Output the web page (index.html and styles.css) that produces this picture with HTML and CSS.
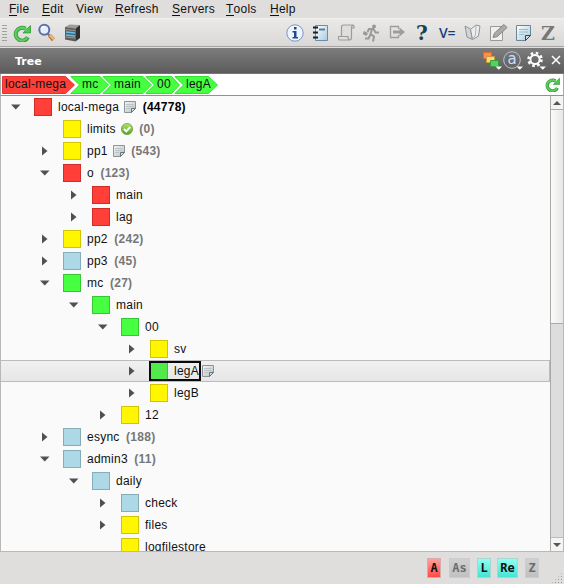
FILE: index.html
```html
<!DOCTYPE html>
<html lang="en">
<head>
<meta charset="utf-8">
<title>Tree</title>
<link rel="stylesheet" href="styles.css">
</head>
<body>
<svg class="defs" width="0" height="0">
  <defs>
    <linearGradient id="steel" x2="1" y2="1"><stop stop-color="#f4f5f6"/><stop offset="1" stop-color="#b9c0c4"/></linearGradient>
    <linearGradient id="blue" x2="1" y2="1"><stop stop-color="#fff"/><stop offset="1" stop-color="#a6cbe0"/></linearGradient>
    <linearGradient id="ok" x2="0" y2="1"><stop stop-color="#b5e070"/><stop offset="1" stop-color="#4fa81e"/></linearGradient>
    <symbol id="note" viewBox="0 0 12 12"><path d="M.5.5h11v7l-4 4h-7z" fill="url(#steel)" stroke="#8d9498"/><path d="M2 3.500h7.500M2 5.500h7.500M2 7.500h4" stroke="#bcc3c7"/><path d="M7.500 11.500v-4h4z" fill="#dde1e3" stroke="#6c7377"/></symbol>
    <symbol id="check" viewBox="0 0 12 12"><circle cx="6" cy="6" r="5.600" fill="url(#ok)" stroke="#5c9e2c" stroke-width=".7"/><path d="M3 6l2.300 2.400L9.200 4" fill="none" stroke="#fff" stroke-width="1.900"/></symbol>
    <symbol id="reload" viewBox="0 0 18 18"><path d="M14.800 13.200A6.400 6.400 0 1 1 12.500 4.800" fill="none" stroke="#2c9a35" stroke-width="4"/><path d="M17.500 1.500v7.400h-7.500z" fill="#4cc552" stroke="#2c9a35" stroke-width=".8"/><path d="M14.400 13.600A6.400 6.400 0 1 1 12.500 4.800L14 6" fill="none" stroke="#5fce61" stroke-width="2.300"/></symbol>
  </defs>
</svg>
<div class="window">
  <nav class="menubar">
    <span class="m-file"><u>F</u>ile</span><span class="m-edit"><u>E</u>dit</span><span class="m-view">View</span><span class="m-refresh"><u>R</u>efresh</span><span class="m-servers"><u>S</u>ervers</span><span class="m-tools"><u>T</u>ools</span><span class="m-help"><u>H</u>elp</span>
  </nav>
  <div class="toolbar">
    <span class="grip"></span>
    <svg class="i-reload" width="18" height="18"><use href="#reload"/></svg>
    <svg class="i-search" width="18" height="19" viewBox="0 0 18 19"><path d="M9.500 10.500l2 2" stroke="#777" stroke-width="2"/><path d="M11.500 12.500l4 4.300" stroke="#b87b3c" stroke-width="4"/><path d="M12 12.500l4 4" stroke="#efbd7c" stroke-width="2"/><circle cx="6.300" cy="6.800" r="5" fill="#e7eefb" stroke="#5870a8" stroke-width="2"/><path d="M3.500 6a3 3 0 0 1 3-2.500" fill="none" stroke="#fff" stroke-width="1.500"/></svg>
    <svg class="i-server" width="17" height="18" viewBox="0 0 17 18"><path d="M1 3L5.500.5 16 1l-4.500 3.500z" fill="#9c9c9c"/><path d="M1 3l10.500 1.500v13L1 15.500z" fill="#5c5c5c"/><path d="M11.500 4.500L16 1v13l-4.500 3.500z" fill="#303030"/><path d="M1.500 5.500l9.500 1M1.500 13l9.500 1" stroke="#999"/><path d="M2 8l9 1M2 11l9 1" stroke="#5ec4ef" stroke-width="1.300"/></svg>
    <span class="space"></span>
    <svg class="i-info" width="18" height="18" viewBox="0 0 18 18"><circle cx="9" cy="9" r="8.200" fill="#eef4fb" stroke="#7597c8"/><path d="M8 3h2.500v2.500H8zM6.500 7h4v6H12v1.500H6.500V13H8V8.500H6.500z" fill="#204a87"/></svg>
    <svg class="i-book" width="17" height="17" viewBox="0 0 17 17"><path d="M3.500 1.500h12v15h-12z" fill="url(#blue)" stroke="#698da5"/><path d="M7 4.500h6v2H7z" fill="#57809e"/><path d="M1 3.500h5M1 8.500h5M1 13.500h5" stroke="#12212c" stroke-width="2"/></svg>
    <svg class="i-scroll" width="17" height="17" viewBox="0 0 17 17"><path d="M3.500 12.500V3q0-2 2-2h9q2 0 1.500 3h-2.500v9q0 3-2 3H2q-2 0-1.500-3.500H10q0 3.500 1.800 3.500M13.500 4q0-2.500 1.500-3" fill="#dedede" stroke="#9b9b9b" stroke-width="1.200"/></svg>
    <svg class="i-run" width="17" height="18" viewBox="0 0 17 18"><circle cx="11" cy="2.500" r="2" fill="#999"/><path d="M9 5L7.500 10l3.500 2.500-1 5M7.500 10.500l-2 4H2M4.500 8L6 5h4.500l2 3.500H16" fill="none" stroke="#999" stroke-width="2"/><path d="M1 7l4 2-1.500 3-4-2z" fill="#999"/></svg>
    <svg class="i-exit" width="17" height="15" viewBox="0 0 17 15"><path d="M9.500 4V1.500H1.500v11h8v-2.500" fill="none" stroke="#9d9d9d" stroke-width="1.300"/><path d="M4 5.500h6.500V2.500L16 7l-5.500 4.500V8.500H4z" fill="#9d9d9d"/></svg>
    <span class="help">?</span><span class="vars">V=</span>
    <svg class="i-open" width="17" height="17" viewBox="0 0 17 17"><path d="M1 2l5.500 3 2 10.500L3 13z" fill="#d2d4d5" stroke="#8e9395"/><path d="M16 2l-4-1-5.500 4.500 2 10L14.500 12z" fill="#eee" stroke="#8e9395"/><path d="M12 1l-.5 10L8.500 15" fill="none" stroke="#b0b4b6"/></svg>
    <svg class="i-pen" width="19" height="18" viewBox="0 0 19 18"><path d="M1.500 2.500h12v14h-12z" fill="#f0f0f0" stroke="#999"/><path d="M4 13.500l1.500-4.500L15 .5l3 3-9.500 9z" fill="#aaa" stroke="#858585"/></svg>
    <svg class="i-note" width="15" height="16" viewBox="0 0 15 16"><path d="M.5.5h14v10l-5 5h-9z" fill="url(#blue)" stroke="#6a8797"/><path d="M3 4.500h9M3 7h9M3 9.500h5" stroke="#9fb8c5"/><path d="M9.500 15.500v-5h5z" fill="#cae0e8" stroke="#244958"/></svg>
    <span class="zed">Z</span>
  </div>
  <header class="titlebar"><h1>Tree</h1>
    <svg class="t-flags" width="20" height="20" viewBox="0 0 20 20"><path d="M1.500 1.500h8v6h-8z" fill="#ff8e4d" stroke="#e56a2c"/><path d="M4.500 5.500h8v6h-8z" fill="#ffd875" stroke="#c79c3c"/><path d="M8.500 9.500h8v6h-8z" fill="#59cf5f" stroke="#379f3d"/><path d="M13.500 15.500H20l-3.200 3.300z" fill="#fff"/></svg>
    <span class="at"><b>a</b><svg width="20" height="20" viewBox="0 0 20 20"><circle cx="9" cy="9" r="8.300" fill="none" stroke="#b9c4d4"/><path d="M13.500 15.500H20l-3.200 3.300z" fill="#fff"/></svg></span>
    <svg class="t-gear" width="20" height="20" viewBox="0 0 20 20"><circle cx="8" cy="8.500" r="4.600" fill="none" stroke="#fff" stroke-width="2"/><circle cx="8" cy="8.500" r="6.500" fill="none" stroke="#fff" stroke-width="2.500" stroke-dasharray="2.550 2.550"/><path d="M12.500 15.500H19l-3.200 3.300z" fill="#fff"/></svg>
    <svg class="t-close" width="10" height="10" viewBox="0 0 10 10"><path d="M1 1l8 8M9 1L1 9" stroke="#fff" stroke-width="1.500"/></svg>
  </header>
  <div class="crumbs">
    <span class="crumb c1"><svg width="74" height="18"><path d="M.5.500H63.500L72.500 9l-9 8.500H.5z"/></svg>local-mega</span>
    <span class="crumb c2"><svg width="42" height="18"><path d="M.8.500H30L38.500 9l-8.500 8.500H.8L9.500 9z"/></svg>mc</span>
    <span class="crumb c3"><svg width="52" height="18"><path d="M.8.500H41L49.500 9l-8.500 8.500H.8L9.500 9z"/></svg>main</span>
    <span class="crumb c4"><svg width="40" height="18"><path d="M.8.500H26.500L34.500 9l-8 8.500H.8L9.500 9z"/></svg>00</span>
    <span class="crumb c5"><svg width="46" height="18"><path d="M.8.500H34.500L43.500 9l-9 8.500H.8L9.500 9z"/></svg>legA</span>
    <svg class="i-refresh" width="15" height="15"><use href="#reload"/></svg>
  </div>
  <main class="pane">
    <div class="tree" id="tree"></div>
    <div class="scroll"><div class="btn"><svg width="8" height="4"><path d="M0 4L4 0l4 4z"/></svg></div><div class="thumb"></div><div class="trough"></div><div class="btn"><svg width="8" height="4"><path d="M0 0h8L4 4z"/></svg></div></div>
  </main>
  <footer class="status"><span class="red">A</span><span class="off as">As</span><span class="aqua">L</span><span class="aqua re">Re</span><span class="off z">Z</span><i class="resize"></i></footer>
</div>
<script src="tree.js"></script>
</body>
</html>
```
FILE: tree.js
```js
// depth, arrow (o = open, c = closed, - = leaf), colour, label, icon, count
const rows = [
  [0, 'o', 'red', 'local-mega', 'note', '44778'],
  [1, '-', 'yellow', 'limits', 'check', '0'],
  [1, 'c', 'yellow', 'pp1', 'note', '543'],
  [1, 'o', 'red', 'o', '', '123'],
  [2, 'c', 'red', 'main'],
  [2, 'c', 'red', 'lag'],
  [1, 'c', 'yellow', 'pp2', '', '242'],
  [1, 'c', 'lightblue', 'pp3', '', '45'],
  [1, 'o', 'green', 'mc', '', '27'],
  [2, 'o', 'green', 'main'],
  [3, 'o', 'green', '00'],
  [4, 'c', 'yellow', 'sv'],
  [4, 'c', 'green', 'legA', 'note'],
  [4, 'c', 'yellow', 'legB'],
  [3, 'c', 'yellow', '12'],
  [1, 'c', 'lightblue', 'esync', '', '188'],
  [1, 'o', 'lightblue', 'admin3', '', '11'],
  [2, 'o', 'lightblue', 'daily'],
  [3, 'c', 'lightblue', 'check'],
  [3, 'c', 'yellow', 'files'],
  [3, '-', 'yellow', 'logfilestore']
];
const arrows = { o: 'M1 2.500h9.500L5.750 7.500z', c: 'M3 .5l5.500 4.500L3 9.500z', '-': '' };
document.getElementById('tree').innerHTML = rows.map(([depth, arrow, color, label, icon, count]) =>
  `<div class="row${label === 'legA' ? ' selected' : ''}" style="padding-left:${9 + depth * 29}px">` +
  `<svg class="arrow" width="11" height="11"><path d="${arrows[arrow]}"/></svg>` +
  `<span class="node"><i class="box ${color}"></i><span class="label">${label}</span></span>` +
  (icon ? `<svg class="mark" width="12" height="12"><use href="#${icon}"/></svg>` : '') +
  (count ? `<b class="count${depth ? '' : ' total'}">(${count})</b>` : '') + '</div>').join('');
```
FILE: styles.css
```css
* { box-sizing: border-box; }
body { margin: 0; overflow: hidden; font: 12px/14px "Liberation Sans", sans-serif; letter-spacing: .25px; color: #111; }
.defs { position: absolute; }
svg { flex: none; }
.window { width: 564px; height: 584px; display: flex; flex-direction: column; background: #dfdedd; }
.menubar { height: 19px; display: flex; padding: 2px 0 0 9px; border-bottom: 1px solid #f1f0ef; flex: none; }
.menubar u { text-decoration: none; display: inline-block; height: 14px; border-bottom: 1px solid #111; vertical-align: top; }
.m-file { width: 33px; }
.m-edit { width: 34px; }
.m-view { width: 39px; }
.m-refresh { width: 57px; }
.m-servers { width: 54px; }
.m-tools { width: 44px; }
.toolbar { height: 28px; flex: none; display: flex; align-items: center; background: linear-gradient(#ebeae9, #d9d8d6); border-bottom: 1px solid #a5a4a3; }
.grip { width: 5px; height: 17px; margin: 0 6px 0 2px; background: radial-gradient(circle, #999 0 .8px, transparent 1px) 0 0 / 2.500px 3px; }
.i-reload { margin-right: 7px; }
.i-search { margin-right: 8px; }
.space { flex: 1; }
.i-info { margin-right: 8px; }
.i-book { margin-right: 9px; }
.i-scroll { margin-right: 8px; }
.i-run { margin-right: 9px; }
.i-exit { margin-right: 10px; }
.help { width: 23px; flex: none; font: bold 20px/20px "DejaVu Serif", serif; color: #174351; letter-spacing: 0; }
.vars { width: 25px; flex: none; font: 600 14px/18px "Open Sans", sans-serif; color: #153e7c; letter-spacing: -.3px; }
.i-open { margin-right: 8px; }
.i-pen { margin-right: 8px; }
.i-note { margin-right: 10px; }
.zed { width: 23px; flex: none; font: bold 19px/20px "DejaVu Serif", serif; color: #777; letter-spacing: 0; }
.titlebar { height: 26px; margin-top: 1px; flex: none; display: flex; align-items: center; padding-left: 15px; background: linear-gradient(#7c7c7c, #5c5c5c); border-bottom: 1px solid #777; }
h1 { margin: 2px auto 0 0; font: bold 11px/14px "DejaVu Sans", sans-serif; color: #fff; letter-spacing: 0; }
.t-flags { margin-right: 1px; }
.at { position: relative; width: 20px; height: 20px; margin-right: 4px; }
.at svg { position: absolute; left: 0; top: 0; }
.at b { display: block; width: 18px; text-align: center; font: 15px/16px "DejaVu Sans", sans-serif; color: #cbdcff; letter-spacing: 0; }
.t-gear { margin-right: 4px; }
.t-close { margin: 0 3px 1px 0; }
.crumbs { height: 22px; flex: none; display: flex; background: #fff; border: 1px solid #aaa; border-top: 0; border-bottom-color: #929292; padding: 2px 3px 0 1px; }
.crumb { position: relative; z-index: 0; line-height: 17px; flex: none; }
.crumb svg { position: absolute; left: 0; top: 0; z-index: -1; fill: #46ff40; stroke: #39df34; }
.c1 { width: 68px; padding-left: 3px; }
.c1 svg { fill: #ff3f38; stroke: #d93a34; }
.c2 { width: 32px; padding-left: 12px; }
.c3 { width: 43px; padding-left: 12px; }
.c4 { width: 29px; padding-left: 12px; }
.c5 { padding-left: 12px; }
.i-refresh { margin: 1px 0 0 auto; }
.pane { height: 456px; flex: none; display: flex; border: solid #b8b8b8; border-width: 0 1px 1px; background: #fafafa; }
.tree { flex: 1; overflow: hidden; }
.row { height: 22px; display: flex; align-items: center; white-space: nowrap; }
.arrow { fill: #505050; margin-right: 2px; }
.node { display: flex; height: 20px; align-items: center; margin-left: 8px; padding-left: 3px; }
.box { width: 18px; height: 18px; border: 1px solid; margin: 0 6px 0 0; flex: none; }
.red { background: #ff3f38; border-color: #d02d28; }
.yellow { background: #fff600; border-color: #d1c400; }
.green { background: #46ff40; border-color: #36c832; }
.lightblue { background: #add8e6; border-color: #86acb8; }
.mark { margin-left: 5px; }
.count { margin-left: 6.500px; color: #777; }
.total { color: #000; }
.selected { background: linear-gradient(#f0f0f0, #e6e6e6); border: 1px solid #bbb; border-width: 1px 1px 1px 0; }
.selected .node { outline: 2px solid #080a0e; outline-offset: -2px; height: 20px; margin-left: 10px; padding: 0 2px 0 1px; }
.selected .green { background: #52e94b; border-color: #3bc238; }
.selected .mark { margin-left: 1px; }
.scroll { width: 13px; display: flex; flex-direction: column; border-left: 1px solid #aaa; background: #ddd; }
.btn { height: 13px; display: flex; align-items: center; justify-content: center; background: #f4f4f3; fill: #555; }
.thumb { height: 215px; background: linear-gradient(90deg, #fbfbf9, #e8e8e7); border: solid #aaa; border-width: 1px 0; }
.trough { flex: 1; border-bottom: 1px solid #bbb; }
.status { flex: 1; display: flex; align-items: flex-start; padding: 6px 0 0 427px; position: relative; }
.status span { width: 14px; height: 20px; margin-right: 8px; border: 1px solid #ccc; text-align: center; font: bold 12px/19px "DejaVu Sans Mono", monospace; letter-spacing: 0; }
.status .red { background: linear-gradient(#ffa09d, #ff4a46); border-color: #d9aaa7; }
.status .aqua { background: linear-gradient(#8ffff0, #46e4d5); border-color: #a5d8d2; margin-right: 6px; }
.status .off { background: linear-gradient(#cfd0d1, #bfc0c2); color: #6c6c6c; }
.status .as, .status .re { width: 21px; }
.status .as, .status .re { margin-right: 7px; }
.resize { position: absolute; right: 1px; bottom: 0; width: 12px; height: 12px; background: radial-gradient(circle, #999 0 .8px, transparent 1px) 0 0 / 3px 3px; clip-path: polygon(100% 0, 100% 100%, 0 100%); }
```
